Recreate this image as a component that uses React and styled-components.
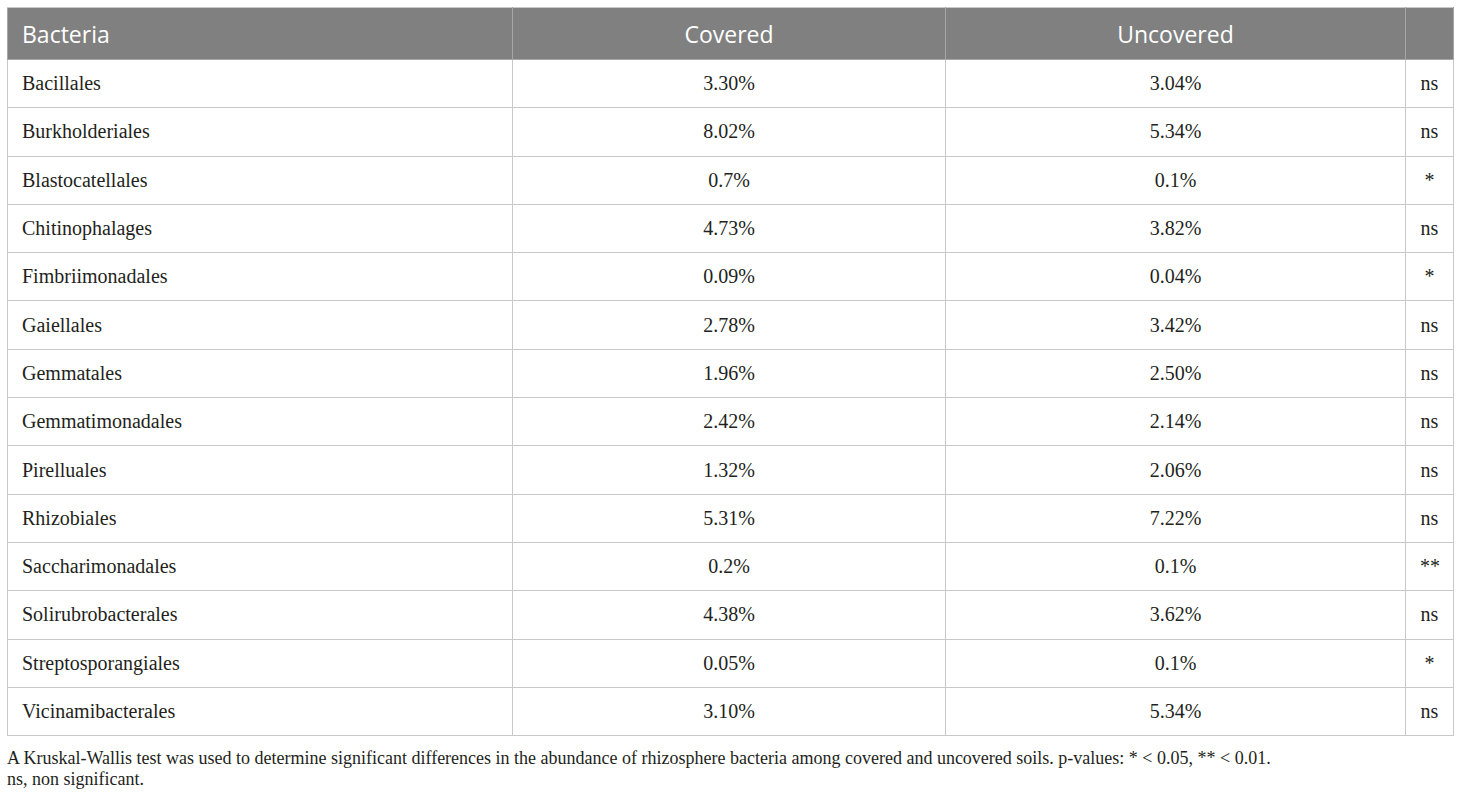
import { createGlobalStyle, styled } from "styled-components"

const GlobalStyle = createGlobalStyle`
    body {
        margin: 0;
        background: #fff;
    }
`

const Page = styled.div`
    padding: 7px 7px 0 7px;
    width: 1446px;
`

const Table = styled.table`
    width: 1446px;
    border-collapse: collapse;
    table-layout: fixed;
    font-family: "Liberation Serif", serif;
    color: #231f20;
`

const HeadRow = styled.tr`
    height: 52px;
    background: #808080;
`

const HeadCell = styled.th`
    border: 1px solid #a6a6a6;
    border-top-color: #c8c8c8;
    padding: 0 14px;
    font-family: "Open Sans", sans-serif;
    font-weight: 400;
    font-size: 23px;
    color: #fff;
    text-align: ${props => props.$align || "center"};
`

const Row = styled.tr`
    height: 48.3px;
`

const Cell = styled.td`
    border: 1px solid #c8c8c8;
    padding: 0 14px;
    font-size: 20px;
    text-align: ${props => props.$align || "center"};
`

const Note = styled.p`
    margin: 12px 0 0 0;
    font-family: "Liberation Serif", serif;
    font-size: 18px;
    line-height: 21px;
    color: #231f20;
`

const filas = [
    ["Bacillales", "3.30%", "3.04%", "ns"],
    ["Burkholderiales", "8.02%", "5.34%", "ns"],
    ["Blastocatellales", "0.7%", "0.1%", "*"],
    ["Chitinophalages", "4.73%", "3.82%", "ns"],
    ["Fimbriimonadales", "0.09%", "0.04%", "*"],
    ["Gaiellales", "2.78%", "3.42%", "ns"],
    ["Gemmatales", "1.96%", "2.50%", "ns"],
    ["Gemmatimonadales", "2.42%", "2.14%", "ns"],
    ["Pirelluales", "1.32%", "2.06%", "ns"],
    ["Rhizobiales", "5.31%", "7.22%", "ns"],
    ["Saccharimonadales", "0.2%", "0.1%", "**"],
    ["Solirubrobacterales", "4.38%", "3.62%", "ns"],
    ["Streptosporangiales", "0.05%", "0.1%", "*"],
    ["Vicinamibacterales", "3.10%", "5.34%", "ns"],
]

const App = () => {
    return (
        <Page>
            <GlobalStyle />
            <Table>
                <colgroup>
                    <col style={{ width: 505 }} />
                    <col style={{ width: 433 }} />
                    <col style={{ width: 460 }} />
                    <col style={{ width: 48 }} />
                </colgroup>
                <thead>
                    <HeadRow>
                        <HeadCell $align="left">Bacteria</HeadCell>
                        <HeadCell>Covered</HeadCell>
                        <HeadCell>Uncovered</HeadCell>
                        <HeadCell />
                    </HeadRow>
                </thead>
                <tbody>
                    {filas.map(fila =>
                        <Row key={fila[0]}>
                            <Cell $align="left">{fila[0]}</Cell>
                            <Cell>{fila[1]}</Cell>
                            <Cell>{fila[2]}</Cell>
                            <Cell>{fila[3]}</Cell>
                        </Row>
                    )}
                </tbody>
            </Table>
            <Note>
                A Kruskal-Wallis test was used to determine significant differences in the abundance of rhizosphere bacteria among covered and uncovered soils. p-values: * &lt; 0.05, ** &lt; 0.01.
                <br />
                ns, non significant.
            </Note>
        </Page>
    )
}

export default App
